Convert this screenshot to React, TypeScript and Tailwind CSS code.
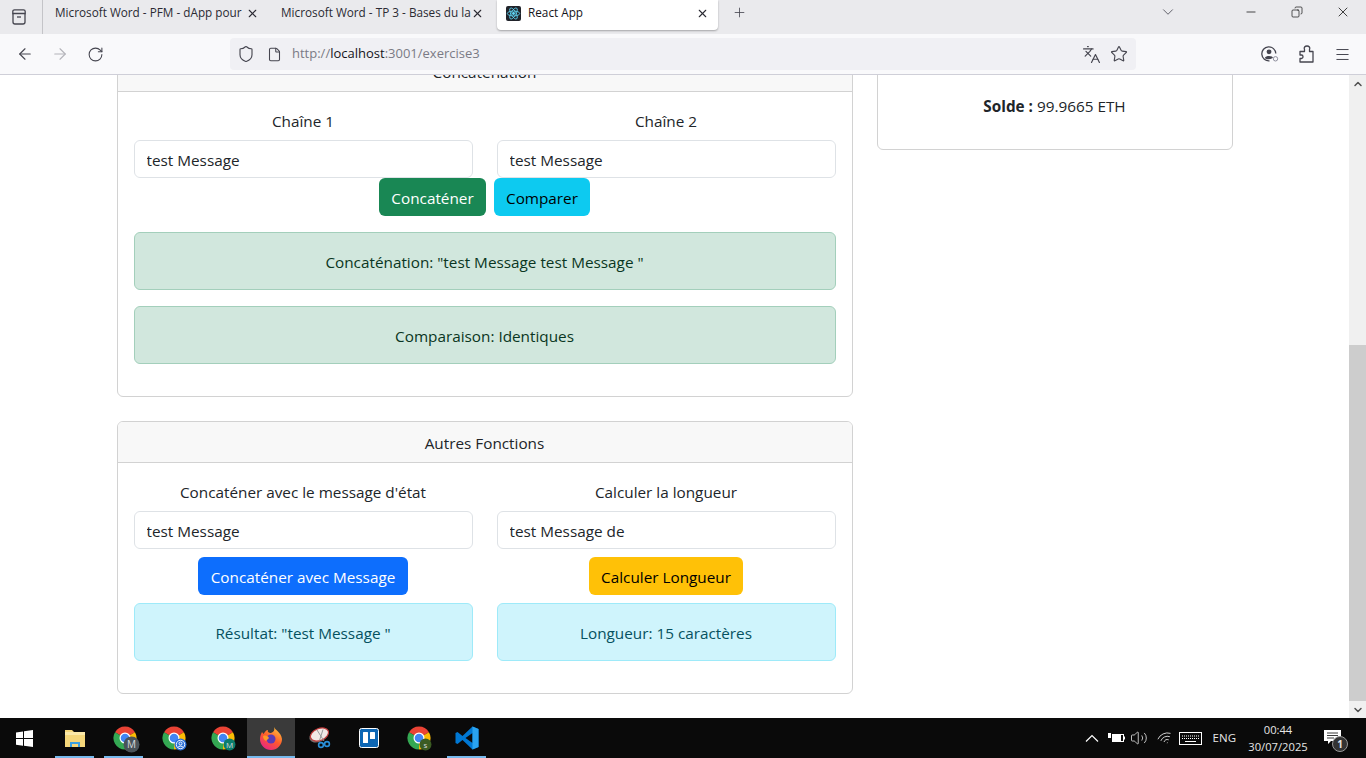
import { useState } from 'react';
import {
  ArrowLeft,
  ArrowRight,
  RotateCw,
  Shield,
  File,
  Star,
  Languages,
  Menu,
  X,
  Plus,
  ChevronDown,
  ChevronUp,
  Minus,
  Copy,
  Volume2,
  Wifi,
} from 'lucide-react';

const PAGE_FONT = 'font-["Open_Sans","Liberation_Sans",sans-serif]';

function TabTitle({ title, width }: { title: string; width: string }) {
  return <span className={`${width} overflow-hidden whitespace-nowrap text-[11.75px] text-[#2b2a33]`}>{title}</span>;
}

function SidebarIcon() {
  return (
    <svg width="18" height="18" viewBox="0 0 18 18" fill="none" stroke="#45454f" strokeWidth="1.3">
      <path d="M3 5.500V14a2 2 0 0 0 2 2h8a2 2 0 0 0 2-2V5.500" />
      <path d="M4.500 1.800h9A1.700 1.700 0 0 1 15.200 3.500v2H2.800v-2A1.700 1.700 0 0 1 4.500 1.800z" />
      <path d="M7 9h4" />
    </svg>
  );
}

function BrowserTabs() {
  return (
    <div className="flex h-[34px] items-start bg-[#eaeaed]">
      <div className="flex h-[34px] w-[43px] shrink-0 items-center justify-center border-r border-[#c4c4c8] pr-[5px]">
        <SidebarIcon />
      </div>
      <div className="flex h-[26px] w-[225px] shrink-0 items-center pl-[12px]">
        <TabTitle title="Microsoft Word - PFM - dApp pour" width="w-[188px]" />
        <X size={13} className="ml-[3px] text-[#2b2a33]" />
      </div>
      <div className="flex h-[26px] w-[229px] shrink-0 items-center pl-[13px]">
        <TabTitle title="Microsoft Word - TP 3 - Bases du lan" width="w-[190px]" />
        <X size={13} className="text-[#2b2a33]" />
      </div>
      <div className="flex h-[30px] w-[221px] shrink-0 items-center rounded-b-[4px] bg-white pb-[4px] pl-[9px] shadow-[0_1px_2px_rgba(0,0,0,0.3)]">
        <ReactIcon />
        <span className="ml-[7px] w-[168px] text-[11.75px] text-[#15141a]">React App</span>
        <X size={13} className="text-[#2b2a33]" />
      </div>
      <Plus size={15} strokeWidth={1.3} className="ml-[14px] mt-[5px] text-[#45454f]" />
      <ChevronDown size={18} strokeWidth={1.2} className="ml-[412px] mt-[3px] text-[#55555f]" />
      <Minus size={14} strokeWidth={1.2} className="ml-[67px] mt-[5px] text-black" />
      <Copy size={12} strokeWidth={1.3} className="ml-[33px] mt-[6px] -scale-x-100 text-black" />
      <X size={16} strokeWidth={1.1} className="ml-[32px] mt-[4px] text-black" />
    </div>
  );
}

function ReactIcon() {
  return (
    <svg width="15" height="15" viewBox="0 0 15 15" className="shrink-0">
      <rect width="15" height="15" rx="2" fill="#20232a" />
      <circle cx="7.5" cy="7.5" r="1.4" fill="#61dafb" />
      <g fill="none" stroke="#61dafb" strokeWidth="0.8">
        <ellipse cx="7.5" cy="7.5" rx="6.2" ry="2.5" />
        <ellipse cx="7.5" cy="7.5" rx="6.2" ry="2.5" transform="rotate(60 7.5 7.5)" />
        <ellipse cx="7.5" cy="7.5" rx="6.2" ry="2.5" transform="rotate(120 7.5 7.5)" />
      </g>
    </svg>
  );
}

function ProfileIcon() {
  return (
    <svg width="20" height="20" viewBox="0 0 20 20" fill="none" stroke="#45454f">
      <path d="M15.800 9.500A7 7 0 1 0 9.500 16.800" strokeWidth="1.3" />
      <circle cx="9" cy="7.800" r="2.400" fill="#45454f" stroke="none" />
      <path d="M4.800 14c1-2.600 7-2.600 8.200-.4-1.400 2.100-6.700 2.300-8.200.4z" fill="#45454f" stroke="none" />
      <circle cx="15.500" cy="14.800" r="2.200" fill="#f9f9fb" stroke="#8f8f9d" strokeWidth="1" />
    </svg>
  );
}

function PuzzleIcon() {
  return (
    <svg width="20" height="20" viewBox="0 0 20 20" fill="none" stroke="#45454f" strokeWidth="1.3" strokeLinejoin="round">
      <path d="M3 7.500h4.500V5.500c-1-2 .5-3.500 2.500-3.500s3.500 1.500 2.500 3.500v2H16V18H3v-3.500h1.500c2 0 2-3.500 0-3.500H3z" />
    </svg>
  );
}

function BrowserToolbar() {
  return (
    <div className="flex h-[41px] items-center border-b border-[#cfcfd8] bg-[#f9f9fb]">
      <ArrowLeft size={18} strokeWidth={1.5} className="ml-[16px] text-[#45454f]" />
      <ArrowRight size={18} strokeWidth={1.5} className="ml-[17px] text-[#b4b4ba]" />
      <RotateCw size={17} strokeWidth={1.5} className="ml-[18px] text-[#45454f]" />
      <div className="ml-[126px] flex h-[32px] w-[906px] items-center rounded-[4px] bg-[#f0f0f4]">
        <Shield size={18} strokeWidth={1.5} className="ml-[7px] text-[#45454f]" />
        <File size={15} strokeWidth={1.7} className="ml-[12px] text-[#45454f]" />
        <span className="ml-[10px] w-[790px] text-[13px] text-[#7b7b85]">
          http://<span className="text-[#15141a]">localhost</span>:3001/exercise3
        </span>
        <Languages size={19} strokeWidth={1.5} className="text-[#45454f]" />
        <Star size={18} strokeWidth={1.5} className="ml-[9px] text-[#45454f]" />
      </div>
      <div className="ml-[124px]">
        <ProfileIcon />
      </div>
      <div className="ml-[17px]">
        <PuzzleIcon />
      </div>
      <Menu size={17} strokeWidth={1.4} className="ml-[17px] text-[#45454f]" />
    </div>
  );
}

function Card({ title, children }: { title: string; children: React.ReactNode }) {
  return (
    <div className="overflow-hidden rounded-[6px] border border-[#d2d2d2] bg-white">
      <div className="h-[41px] border-b border-[#d2d2d2] bg-[#f8f8f8] pt-[9px] text-center leading-6">{title}</div>
      <div className="p-4 pb-0">{children}</div>
    </div>
  );
}

function Field({ label, value, onChange }: { label: string; value: string; onChange?: (v: string) => void }) {
  return (
    <div>
      <label className="mb-[7px] block pt-[1px] text-center leading-6">{label}</label>
      <input
        value={value}
        onChange={(e) => onChange?.(e.target.value)}
        className="block h-[38px] w-full rounded-[6px] border border-[#dee2e6] bg-white px-3 pt-[1px] leading-6 text-[#212529] outline-none"
      />
    </div>
  );
}

function Alert({ kind, children }: { kind: 'success' | 'info'; children: React.ReactNode }) {
  const cls =
    kind === 'success'
      ? 'border-[#a3cfbb] bg-[#d1e7dd] text-[#0a3622]'
      : 'border-[#9eeaf9] bg-[#cff4fc] text-[#055160]';
  return <div className={`mb-4 h-[58px] rounded-[6px] border px-4 pt-[17px] text-center leading-6 ${cls}`}>{children}</div>;
}

function Btn({ className, children }: { className: string; children: React.ReactNode }) {
  return <button className={`h-[38px] rounded-[6px] pt-[1px] leading-6 ${className}`}>{children}</button>;
}

function PageContent() {
  const [a, setA] = useState('test Message');
  const [b, setB] = useState('test Message');
  const [c, setC] = useState('test Message');
  const [d, setD] = useState('test Message de');

  return (
    <div className={`mx-auto -mt-[25px] flex w-[1140px] gap-6 px-3 text-[15.3px] text-[#212529] ${PAGE_FONT}`}>
      <div className="flex w-[736px] shrink-0 flex-col gap-6">
        <Card title="Concaténation">
          <div className="grid grid-cols-2 gap-6">
            <Field label="Chaîne 1" value={a} onChange={setA} />
            <Field label="Chaîne 2" value={b} onChange={setB} />
          </div>
          <div className="mb-4 flex justify-center gap-2">
            <Btn className="w-[107px] bg-[#198754] text-white">Concaténer</Btn>
            <Btn className="w-[96px] bg-[#0dcaf0] text-black">Comparer</Btn>
          </div>
          <Alert kind="success">Concaténation: "test Message test Message "</Alert>
          <Alert kind="success">Comparaison: Identiques</Alert>
          <div className="h-4" />
        </Card>
        <Card title="Autres Fonctions">
          <div className="grid grid-cols-2 gap-6">
            <div>
              <Field label="Concaténer avec le message d'état" value={c} onChange={setC} />
              <div className="my-2 flex justify-center">
                <Btn className="w-[210px] bg-[#0d6efd] text-white">Concaténer avec Message</Btn>
              </div>
              <Alert kind="info">Résultat: "test Message "</Alert>
            </div>
            <div>
              <Field label="Calculer la longueur" value={d} onChange={setD} />
              <div className="my-2 flex justify-center">
                <Btn className="w-[154px] bg-[#ffc107] text-black">Calculer Longueur</Btn>
              </div>
              <Alert kind="info">Longueur: 15 caractères</Alert>
            </div>
          </div>
          <div className="h-4" />
        </Card>
      </div>
      <div className="flex h-[100px] w-[356px] shrink-0 flex-col justify-end rounded-[6px] border border-[#d2d2d2] bg-white p-4 text-center">
        <p className="mb-[15px] leading-6">
          <strong className="font-bold">Solde : </strong>99.9665 ETH
        </p>
      </div>
    </div>
  );
}

function Scrollbar() {
  return (
    <div className="flex w-[17px] shrink-0 flex-col bg-[#f0f0f0]">
      <div className="flex h-[17px] items-center justify-center">
        <ChevronUp size={12} strokeWidth={3} className="text-[#505050]" />
      </div>
      <div className="mt-[253px] flex-1 bg-[#cdcdcd]" />
      <div className="flex h-[17px] items-center justify-center">
        <ChevronDown size={12} strokeWidth={3} className="text-[#505050]" />
      </div>
    </div>
  );
}

function ChromeIcon({ badge, letter, radius = 6, person }: { badge: string; letter?: string; radius?: number; person?: boolean }) {
  return (
    <svg width="28" height="28" viewBox="0 0 28 28" className="ml-[4px] mt-[3px] overflow-visible">
      <path d="M13 12 3.040 6.250A11.500 11.500 0 0 1 22.960 6.250z" fill="#ea4335" />
      <path d="M13 12 22.960 6.250A11.500 11.500 0 0 1 13 23.500z" fill="#fbbc05" />
      <path d="M13 12 13 23.500A11.500 11.500 0 0 1 3.040 6.250z" fill="#34a853" />
      <circle cx="13" cy="12" r="5.500" fill="#fff" />
      <circle cx="13" cy="12" r="4.300" fill="#4285f4" />
      <circle cx="19.500" cy="18.500" r={radius} fill={badge} />
      {person && (
        <g fill="none" stroke="#fff" strokeWidth="0.9">
          <circle cx="19.500" cy="18.500" r="4.200" />
          <circle cx="19.500" cy="17.500" r="1.500" />
          <path d="M16.800 21.500c.8-1.800 4.600-1.800 5.400 0" />
        </g>
      )}
      {letter && (
        <text x="19.500" y={radius > 7 ? 22 : 21.500} textAnchor="middle" fontSize={radius > 7 ? 10 : 8} fill="#d5dade" fontFamily="Open Sans, sans-serif">
          {letter}
        </text>
      )}
    </svg>
  );
}

function TaskbarSlot({ active, open, children }: { active?: boolean; open?: boolean; children: React.ReactNode }) {
  return (
    <div className={`relative flex h-[40px] shrink-0 items-center justify-center ${active ? 'ml-[1px] w-[48px] bg-[#3a3a3a]' : 'w-[49px]'}`}>
      {children}
      {open && (
        <div className={`absolute bottom-0 h-[2px] bg-[#76b9ed] ${active ? 'inset-x-0' : 'inset-x-[5px]'}`} />
      )}
    </div>
  );
}

function Taskbar() {
  return (
    <div className="flex h-[40px] items-center bg-[#0a0a0a] text-white">
      <div className="flex w-[50px] shrink-0 justify-center pr-[2px]">
        <svg width="17" height="17" viewBox="0 0 17 17" fill="#fff">
          <path d="M0 2.400 7 1.400v6.700H0zM8 1.300 17 0v8.100H8zM0 9h7v6.700l-7-1zM8 9h9v8l-9-1.300z" />
        </svg>
      </div>
      <TaskbarSlot open>
        <svg width="22" height="20" viewBox="0 0 22 20">
          <path d="M1 2h7l2 2h11v15H1z" fill="#f5d77a" />
          <path d="M1 4h20v3H1z" fill="#fbe9a8" />
          <path d="M6 14h10v5H6z" fill="#3aa0e0" />
          <path d="M8 16h6v3H8z" fill="#f5d77a" />
        </svg>
      </TaskbarSlot>
      <TaskbarSlot open>
        <ChromeIcon badge="#4a5359" letter="M" radius={8} />
      </TaskbarSlot>
      <TaskbarSlot>
        <ChromeIcon badge="#2a6fd6" person />
      </TaskbarSlot>
      <TaskbarSlot>
        <ChromeIcon badge="#0b7d6c" letter="M" />
      </TaskbarSlot>
      <TaskbarSlot active open>
        <svg width="24" height="24" viewBox="0 0 24 24">
          <defs>
            <linearGradient id="fx" x1="0.8" y1="0" x2="0.2" y2="1">
              <stop offset="0" stopColor="#ffc43a" />
              <stop offset="0.5" stopColor="#ff5a2c" />
              <stop offset="1" stopColor="#e6218a" />
            </linearGradient>
          </defs>
          <path d="M15 1c1 3 7 5 8 12a11 11 0 0 1-22 0c0-3 1-5 2-7l1.500 2C6 6 7 4 9 4c-1 2 1 3 3 3 3-1 4-3 3-6z" fill="url(#fx)" />
          <circle cx="12" cy="13" r="4.500" fill="#5b3bb5" />
          <path d="M4 10c3-1 5 0 6 2l-3 3c-2-1-3-3-3-5z" fill="#ff9a24" />
        </svg>
      </TaskbarSlot>
      <TaskbarSlot>
        <svg width="24" height="24" viewBox="0 0 24 24">
          <ellipse cx="10.500" cy="10" rx="9.500" ry="6" transform="rotate(-22 10.500 10)" fill="#77706e" />
          <ellipse cx="11.500" cy="8.500" rx="9.500" ry="6" transform="rotate(-22 11.500 8.500)" fill="#f1e8e6" stroke="#c03a3a" strokeWidth="1.200" />
          <path d="M9 4l7 11M15 3.500l-3.500 11" stroke="#999" strokeWidth="1" />
          <circle cx="13" cy="19" r="2.400" fill="none" stroke="#2a8fd8" strokeWidth="1.600" />
          <circle cx="19" cy="18" r="2.400" fill="none" stroke="#2a8fd8" strokeWidth="1.600" />
        </svg>
      </TaskbarSlot>
      <TaskbarSlot>
        <svg width="20" height="20" viewBox="0 0 20 20">
          <rect x="0.500" y="0.500" width="19" height="19" rx="2" fill="#0c66b4" stroke="#fff" />
          <rect x="4" y="4" width="5" height="11" rx="0.500" fill="#fff" />
          <rect x="11" y="4" width="5" height="7" rx="0.500" fill="#fff" />
        </svg>
      </TaskbarSlot>
      <TaskbarSlot>
        <ChromeIcon badge="#3b5c23" letter="s" />
      </TaskbarSlot>
      <TaskbarSlot open>
        <svg width="24" height="24" viewBox="0 0 24 24">
          <path d="M17.500 0.500 23.500 3v18l-6 2.500L7.500 14l-5 4L0.500 17V7l2-1 5 4z" fill="#0078d4" />
          <path d="M17.500 7 10.500 12l7 5z" fill="#0a0a0a" />
          <path d="M17.500 0.500 23.500 3v18l-6 2.500z" fill="#2aa3f0" />
        </svg>
      </TaskbarSlot>
      <div className="ml-auto flex h-[40px] items-center font-['Open_Sans',sans-serif] text-[#e6e6e6]">
        <svg width="14" height="8" viewBox="0 0 14 8" fill="none" stroke="#fff" strokeWidth="1.200">
          <path d="M1 7.500 7 1.500l6 6" />
        </svg>
        <svg width="17" height="12" viewBox="0 0 17 12" className="ml-[9px]" fill="none" stroke="#fff">
          <rect x="4.500" y="2.500" width="11" height="7" />
          <rect x="5" y="3" width="8" height="6" fill="#fff" stroke="none" />
          <path d="M0 1h3v5H0zM16 4.500h1v3h-1z" fill="#fff" stroke="none" />
        </svg>
        <Volume2 size={18} strokeWidth={1.1} className="ml-[5px]" />
        <Wifi size={16} strokeWidth={1.2} className="ml-[9px] rotate-[-25deg]" />
        <svg width="24" height="13" viewBox="0 0 24 13" className="ml-[6px]" fill="none" stroke="#fff">
          <rect x="0.500" y="0.500" width="22" height="12" />
          <path d="M3 4h17M3 6.500h17" strokeDasharray="1 1" />
          <path d="M6 9.500h11" />
        </svg>
        <span className="ml-[10px] text-[11.5px]">ENG</span>
        <div className="ml-[12px] flex w-[60px] flex-col items-center text-[11.2px] leading-[17px]">
          <span>00:44</span>
          <span>30/07/2025</span>
        </div>
        <div className="relative ml-[14px] mr-[24px] flex w-[20px] justify-center">
          <svg width="17" height="16" viewBox="0 0 17 16" fill="#fff">
            <path d="M0 0h17v11H7l-3 3v-3H0z" />
            <path d="M3 3h11M3 5.500h11M3 8h7" stroke="#0a0a0a" strokeWidth="0.800" />
          </svg>
          <span className="absolute -bottom-[6px] -right-[6px] flex h-[16px] w-[16px] items-center justify-center rounded-full border border-[#999] bg-[#333] text-[10px] font-bold leading-none">
            1
          </span>
        </div>
      </div>
    </div>
  );
}

export default function App() {
  return (
    <div className={`flex h-[758px] w-[1366px] flex-col overflow-hidden bg-white ${PAGE_FONT}`}>
      <BrowserTabs />
      <BrowserToolbar />
      <div className="flex min-h-0 flex-1">
        <div className="min-w-0 flex-1 overflow-hidden bg-white">
          <PageContent />
        </div>
        <Scrollbar />
      </div>
      <Taskbar />
    </div>
  );
}
